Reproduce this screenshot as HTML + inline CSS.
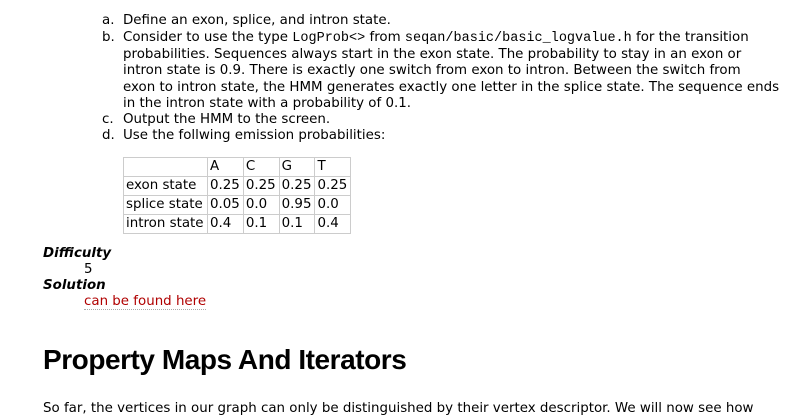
<!DOCTYPE html>
<html><head><meta charset="utf-8"><style>
body{margin:0;width:805px;height:414px;overflow:hidden;background:#fff;position:relative;font-family:"DejaVu Sans","Liberation Sans",sans-serif;font-size:13.4px;color:#000}
.l{position:absolute;white-space:nowrap;line-height:16px}
code{font-family:"Liberation Mono",monospace;font-size:13.5px}
table{position:absolute;left:123px;top:157px;border-collapse:collapse}
td{border:1px solid #ccc;padding:0 3px 0 2px;height:18px;line-height:18px;white-space:nowrap}
h1{position:absolute;left:43px;top:344px;margin:0;font-family:"Liberation Sans",sans-serif;font-weight:bold;font-size:28px;letter-spacing:-0.45px;line-height:32px}
</style></head><body>
<div class="l" style="left:102px;top:13px">a.</div><div class="l" style="left:123px;top:13px">Define an exon, splice, and intron state.</div>
<div class="l" style="left:102px;top:30px">b.</div><div class="l" style="left:123px;top:30px">Consider to use the type <code>LogProb&lt;&gt;</code> from <code>seqan/basic/basic_logvalue.h</code> for the transition</div>
<div class="l" style="left:123px;top:47px">probabilities. Sequences always start in the exon state. The probability to stay in an exon or</div>
<div class="l" style="left:123px;top:63px">intron state is 0.9. There is exactly one switch from exon to intron. Between the switch from</div>
<div class="l" style="left:123px;top:80px">exon to intron state, the HMM generates exactly one letter in the splice state. The sequence ends</div>
<div class="l" style="left:123px;top:96px">in the intron state with a probability of 0.1.</div>
<div class="l" style="left:102px;top:112px">c.</div><div class="l" style="left:123px;top:112px">Output the HMM to the screen.</div>
<div class="l" style="left:102px;top:128px">d.</div><div class="l" style="left:123px;top:128px">Use the follwing emission probabilities:</div>
<table>
<tr><td style="width:78px"></td><td>A</td><td>C</td><td>G</td><td>T</td></tr>
<tr><td>exon state</td><td>0.25</td><td>0.25</td><td>0.25</td><td>0.25</td></tr>
<tr><td>splice state</td><td>0.05</td><td>0.0</td><td>0.95</td><td>0.0</td></tr>
<tr><td>intron state</td><td>0.4</td><td>0.1</td><td>0.1</td><td>0.4</td></tr>
</table>
<div class="l" style="left:43px;top:246px;font-weight:bold;font-style:italic">Difficulty</div>
<div class="l" style="left:84px;top:262px">5</div>
<div class="l" style="left:43px;top:278px;font-weight:bold;font-style:italic">Solution</div>
<div class="l" style="left:84px;top:294px;color:#b00000;border-bottom:1px dotted #aaa;line-height:15px">can be found here</div>
<h1>Property Maps And Iterators</h1>
<div class="l" style="left:43px;top:401px">So far, the vertices in our graph can only be distinguished by their vertex descriptor. We will now see how</div>
</body></html>
